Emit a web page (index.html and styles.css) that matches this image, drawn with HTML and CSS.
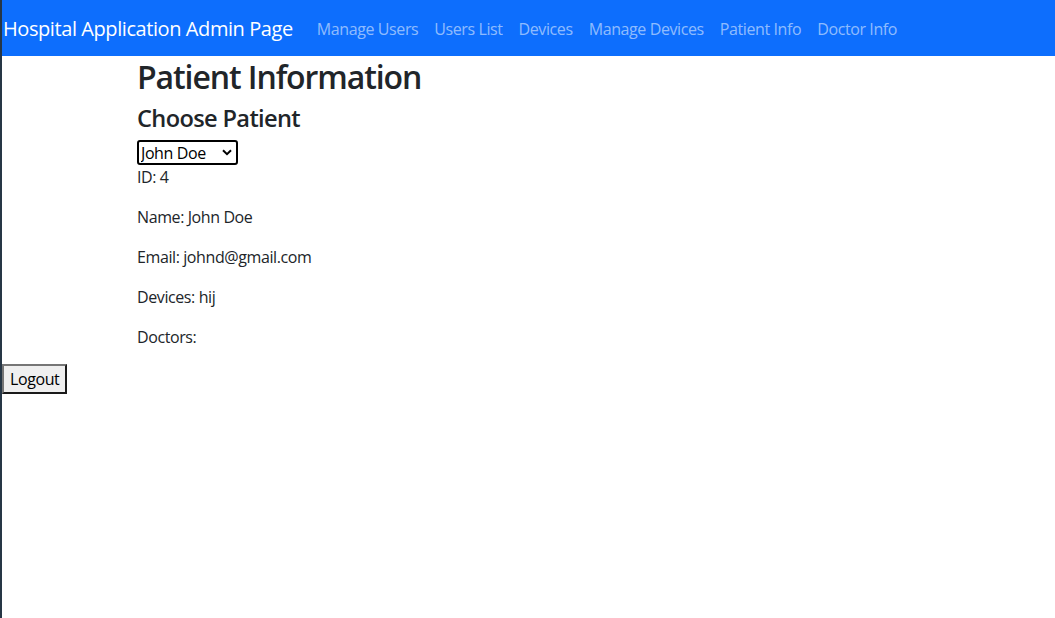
FILE: index.html
```html
<!DOCTYPE html>
<html lang="en">
<head>
<meta charset="utf-8">
<title>Hospital Application Admin Page</title>
<link rel="stylesheet" href="styles.css">
</head>
<body>
<div class="page">
  <nav class="navbar">
    <span class="brand">Hospital Application Admin Page</span>
    <ul class="nav-links">
      <li><a href="#">Manage Users</a></li>
      <li><a href="#">Users List</a></li>
      <li><a href="#">Devices</a></li>
      <li><a href="#">Manage Devices</a></li>
      <li><a href="#">Patient Info</a></li>
      <li><a href="#">Doctor Info</a></li>
    </ul>
  </nav>
  <main class="content">
    <h1 class="title">Patient Information</h1>
    <h4 class="subtitle">Choose Patient</h4>
    <div class="select-wrap">
      <select class="patient-select">
        <option>John Doe</option>
      </select>
      <svg class="chevron" width="10" height="7" viewBox="0 0 10 7"><path d="M1 1.2 L5 5.2 L9 1.2" fill="none" stroke="#000" stroke-width="2"/></svg>
    </div>
    <p>ID: 4</p>
    <p>Name: John Doe</p>
    <p>Email: johnd@gmail.com</p>
    <p>Devices: hij</p>
    <p>Doctors: </p>
  </main>
  <button class="logout">Logout</button>
</div>
</body>
</html>
```
FILE: styles.css
```css
html, body {
  margin: 0;
  padding: 0;
  height: 100%;
  background: #fff;
}
body {
  font-family: "Open Sans", "Noto Sans", sans-serif;
  font-size: 16px;
  line-height: 24px;
  color: #212529;
  letter-spacing: -0.4px;
}
.page {
  min-height: 100%;
  border-left: 2px solid #263645;
  box-sizing: border-box;
}
.navbar {
  display: flex;
  align-items: center;
  height: 56px;
  background: #0d6efd;
  padding-left: 1px;
}
.brand {
  color: #fff;
  font-size: 20px;
  letter-spacing: -0.42px;
  margin-right: 16px;
  white-space: nowrap;
  padding-top: 1px;
}
.nav-links {
  display: flex;
  list-style: none;
  margin: 0;
  padding: 0;
}
.nav-links a {
  display: block;
  padding: 9px 8px 7px;
  color: rgba(255,255,255,0.55);
  text-decoration: none;
  white-space: nowrap;
}
.content {
  padding-left: 135px;
  padding-top: 2px;
}
.title {
  margin: 0 0 8px;
  font-size: 32px;
  line-height: 38px;
  font-weight: 600;
  letter-spacing: -1.1px;
}
.subtitle {
  margin: 0 0 8px;
  font-size: 23.6px;
  line-height: 28px;
  font-weight: 600;
  letter-spacing: -0.64px;
}
.select-wrap {
  position: relative;
  display: inline-block;
  vertical-align: top;
}
.patient-select {
  appearance: none;
  -webkit-appearance: none;
  display: block;
  width: 101px;
  height: 25px;
  box-sizing: border-box;
  border: 2px solid #000;
  border-radius: 3px;
  background: #fff;
  color: #000;
  font-family: inherit;
  font-size: 16px;
  letter-spacing: -0.4px;
  padding: 0 0 0 2px;
  margin: 0;
}
.chevron {
  position: absolute;
  right: 6px;
  top: 9px;
  pointer-events: none;
}
.content p {
  margin: 0 0 16px;
}
.logout {
  display: block;
  margin: -1px 0 0;
  height: 30px;
  padding: 0 6px;
  font-family: inherit;
  font-size: 16px;
  letter-spacing: -0.4px;
  color: #000;
  background: #efefef;
  border: 2px solid;
  border-color: #767676 #1a1a1a #1a1a1a #767676;
}
```
